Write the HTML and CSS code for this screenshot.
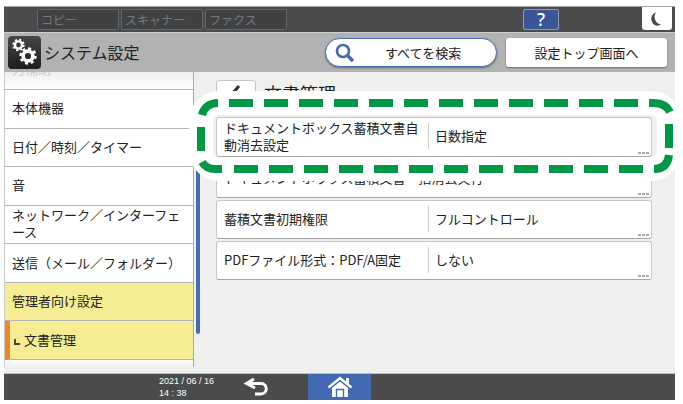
FILE: index.html
```html
<!DOCTYPE html>
<html lang="ja">
<head>
    <meta charset="UTF-8">
    <meta name="viewport" content="width=device-width, initial-scale=1.0">
    <title>システム設定</title>
    <link rel="stylesheet" href="styles.css">
</head>
<body>
    <div class="screen">
        <nav class="top-bar">
            <button class="app-tab">コピー</button>
            <button class="app-tab">スキャナー</button>
            <button class="app-tab">ファクス</button>
            <button class="help-btn">?</button>
            <button class="sleep-btn" aria-label="スリープ">
                <svg width="12" height="14" viewBox="0 0 12 14">
                    <path d="M5 0C1 2-1 6 1 10C3 14 7 14.500 10 12.500C6.500 12 4.500 9.500 3.800 6.500C3.300 4 3.700 2 5 0Z" fill="#4a4b4d"/>
                </svg>
            </button>
        </nav>

        <header class="header">
            <span class="app-icon">
                <svg width="33" height="33" viewBox="0 0 33 33" fill="none" stroke="#fff">
                    <circle cx="10.500" cy="9" r="3.600" stroke-width="2.400"/>
                    <circle cx="10.500" cy="9" r="5.200" stroke-width="2" stroke-dasharray="2.040 2.040"/>
                    <circle cx="20" cy="20" r="4.900" stroke-width="3.600"/>
                    <circle cx="20" cy="20" r="7.400" stroke-width="2.600" stroke-dasharray="2.900 2.900"/>
                </svg>
            </span>
            <h1>システム設定</h1>
            <button class="search-btn">
                <svg width="20" height="20" viewBox="0 0 20 20" fill="none" stroke="#416ab3">
                    <circle cx="8" cy="8" r="6" stroke-width="2.600"/>
                    <path d="M12.500 12.500L18 18" stroke-width="3.400"/>
                </svg>
                <span>すべてを検索</span>
            </button>
            <button class="home-link">設定トップ画面へ</button>
        </header>

        <div class="content">
            <ul class="sidebar">
                <li class="cut"><a href="#">力補助</a></li>
                <li><a href="#">本体機器</a></li>
                <li><a href="#">日付／時刻／タイマー</a></li>
                <li><a href="#">音</a></li>
                <li><a href="#">ネットワーク／インターフェース</a></li>
                <li><a href="#">送信（メール／フォルダー）</a></li>
                <li class="open"><a href="#">管理者向け設定</a></li>
                <li class="open current"><a href="#"><i class="branch"></i>文書管理</a></li>
                <li></li>
            </ul>
            <div class="scrollbar"><div class="thumb"></div></div>

            <main class="main">
                <div class="title-row">
                    <button class="prev-btn" aria-label="戻る">
                        <svg width="12" height="18" viewBox="0 0 12 18" fill="none" stroke="#333" stroke-width="3">
                            <path d="M10 1L3 9L10 17"/>
                        </svg>
                    </button>
                    <h2>文書管理</h2>
                </div>

                <div class="settings">
                    <div class="marked">
                        <button class="setting">
                            <span class="name">ドキュメントボックス蓄積文書自動消去設定</span>
                            <span class="value">日数指定</span>
                        </button>
                        <div class="marker">
                            <div class="dashes top"></div>
                            <div class="dashes bottom"></div>
                            <div class="dash left"></div>
                            <div class="dash right"></div>
                            <svg class="corner tl" viewBox="0 0 40 40"><path d="M13 24C15 16 21 12 29 12"/></svg>
                            <svg class="corner tr" viewBox="0 0 40 40"><path d="M8 12H13C20 12 26 15 29 21"/></svg>
                            <svg class="corner bl" viewBox="0 0 40 40"><path d="M13 21C16 26 20 28 26 28H33"/></svg>
                            <svg class="corner br" viewBox="0 0 40 40"><path d="M28 14C27 23 22 28 13 28"/></svg>
                        </div>
                    </div>
                    <button class="setting">
                        <span class="name wide">ドキュメントボックス蓄積文書一括消去実行</span>
                    </button>
                    <button class="setting">
                        <span class="name">蓄積文書初期権限</span>
                        <span class="value">フルコントロール</span>
                    </button>
                    <button class="setting">
                        <span class="name">PDFファイル形式：PDF/A固定</span>
                        <span class="value">しない</span>
                    </button>
                </div>
            </main>
        </div>

        <footer class="bottom-bar">
            <div class="clock">2021 / 06 / 16<br>14 : 38</div>
            <button class="back-btn" aria-label="戻る">
                <svg width="26" height="20" viewBox="0 0 26 20" fill="none" stroke="#fff" stroke-width="3">
                    <path d="M11 2L3.500 6.500L12 11"/>
                    <path d="M3 6.500H18C25 6.500 25 17 18 17H12"/>
                </svg>
            </button>
            <button class="home-btn" aria-label="ホーム">
                <svg width="26" height="22" viewBox="0 0 26 22">
                    <path d="M1.500 11.500L13 2L24.500 11.500" fill="none" stroke="#fff" stroke-width="2.400"/>
                    <path d="M19 2H22V8L19 5.500Z" fill="#fff"/>
                    <path d="M13 5.500L21 12V21H5V12Z" fill="#fff"/>
                    <path d="M9.500 21V13.500H16.500V21" fill="none" stroke="#416ab3" stroke-width="1.400"/>
                </svg>
            </button>
        </footer>
    </div>
</body>
</html>
```

FILE: styles.css
```css
* {
    margin: 0;
    padding: 0;
    box-sizing: border-box;
}

body {
    font-family: 'Noto Sans CJK JP', sans-serif;
    font-size: 13px;
    line-height: 17px;
    color: #222;
    background: #fff;
    min-height: 100vh;
    display: flex;
    padding: 6px 8px 4px 4px;
}

button {
    font: inherit;
    color: inherit;
    border: none;
    background: none;
    cursor: pointer;
}

a {
    color: inherit;
    text-decoration: none;
}

svg {
    display: block;
}

.screen {
    flex: 1;
    min-width: 0;
    display: flex;
    flex-direction: column;
    background: #efefee;
}

/* top bar */
.top-bar {
    display: flex;
    gap: 2px;
    height: 27px;
    padding: 0 3px 0 33px;
    background: #4a4b4d;
    border-top: 1px solid #a5a5a5;
    border-bottom: 1px solid #d0d0d0;
}

.app-tab {
    width: 82px;
    height: 21px;
    margin-top: 2px;
    padding-left: 3px;
    border: 1px solid #646566;
    border-radius: 2px;
    background: #404143;
    color: #77787a;
    font-size: 12px;
    line-height: 17px;
    text-align: left;
}

.help-btn {
    width: 36px;
    height: 21px;
    margin: 2px 81px 0 auto;
    border: 1px solid #8d9bbd;
    border-radius: 2px;
    background: #395696;
    color: #fff;
    font-family: 'Noto Sans', sans-serif;
    font-size: 18px;
    font-weight: 500;
}

.sleep-btn {
    width: 30px;
    height: 23px;
    border-radius: 0 0 3px 3px;
    background: #fff;
    display: flex;
    align-items: center;
    justify-content: center;
}

/* header */
.header {
    display: flex;
    align-items: center;
    height: 39px;
    padding: 0 8px 0 4px;
    background: #b2b2b2;
}

.app-icon {
    width: 33px;
    height: 33px;
    border-radius: 4px;
    background: linear-gradient(#474747, #1d1d1d);
}

h1 {
    margin-left: 3px;
    font-size: 16px;
    font-weight: 400;
}

.search-btn,
.home-link {
    height: 29px;
    background: #fff;
    box-shadow: 0 1px 2px rgba(0, 0, 0, 0.4);
}

.search-btn {
    display: flex;
    align-items: center;
    gap: 30px;
    width: 172px;
    margin-left: auto;
    padding-left: 9px;
    border: 1px solid #416ab3;
    border-radius: 15px;
}

.home-link {
    width: 161px;
    margin-left: 9px;
    border-radius: 3px;
}

/* content */
.content {
    flex: 1;
    display: flex;
}

.sidebar {
    width: 190px;
    margin-bottom: 6px;
    list-style: none;
    display: grid;
    grid-template-rows: 18px repeat(7, 1fr) 7px;
    background: #fff;
    border-left: 1px solid #c9c9c9;
    border-right: 1px solid #a9a9a9;
}

.sidebar li {
    display: flex;
    align-items: center;
    padding: 0 6px 2px 7px;
    border-bottom: 1px solid #b5b5b5;
}

.sidebar li:last-child {
    border-bottom: none;
    background: linear-gradient(#fff, #efefee);
}

.sidebar .cut {
    align-items: flex-start;
    overflow: hidden;
    background: linear-gradient(#efefef, #fff);
    color: #ccc;
}

.cut a {
    margin-top: -12px;
}

.sidebar .open {
    background: #f5ed94;
}

.sidebar .current {
    padding-left: 4px;
    border-left: 5px solid #ec8722;
}

.branch {
    display: inline-block;
    width: 6px;
    height: 6px;
    margin-right: 4px;
    border-left: 2px solid #444;
    border-bottom: 2px solid #444;
}

.scrollbar {
    width: 4px;
    margin-left: 2px;
}

.thumb {
    height: 182px;
    margin-top: 80px;
    border-radius: 2px;
    background: #456db4;
}

.main {
    flex: 1;
    min-width: 0;
    padding: 8px 23px 0 16px;
}

.title-row {
    display: flex;
    height: 37px;
    gap: 8px;
}

.prev-btn {
    width: 40px;
    height: 28px;
    padding-left: 12px;
    border: 1px solid #c4c4c4;
    border-radius: 3px;
    background: #fff;
}

h2 {
    font-size: 18px;
    font-weight: 400;
    line-height: 26px;
}

.settings {
    display: flex;
    flex-direction: column;
    gap: 2px;
}

.setting {
    position: relative;
    display: flex;
    align-items: center;
    width: 100%;
    min-height: 39px;
    padding: 1px 7px 3px;
    border: 1px solid #c6c6c6;
    border-bottom-color: #a5a5a5;
    border-radius: 3px;
    background: #fff;
    text-align: left;
}

.setting::after {
    content: '';
    position: absolute;
    right: 2px;
    bottom: 2px;
    width: 11px;
    height: 2px;
    background: repeating-linear-gradient(to right, #aaa 0 3px, transparent 3px 4px);
}

.name {
    width: 204px;
    padding-right: 6px;
}

.name.wide {
    width: auto;
}

.value {
    padding-left: 6px;
    border-left: 1px solid #ccc;
    line-height: 26px;
}

/* dashed frame around the highlighted setting */
.marked {
    position: relative;
    z-index: 1;
}

.marker {
    position: absolute;
    top: -26px;
    right: -29px;
    bottom: -24px;
    left: -27px;
    border: 24px solid #fff;
    border-radius: 30px;
    pointer-events: none;
}

.marker > * {
    position: absolute;
}

.dashes {
    height: 8px;
    background: linear-gradient(to right, #009844 24px, transparent 24px) 0 0 / 35px 8px round;
}

.dashes.top {
    top: -16px;
    left: 16px;
    right: 8px;
}

.dashes.bottom {
    bottom: -16px;
    left: 21px;
    right: 3px;
}

.dash {
    width: 8px;
    height: 24px;
    background: #009844;
}

.dash.left {
    top: 12px;
    left: -16px;
}

.dash.right {
    top: 9px;
    right: -16px;
}

.corner {
    width: 40px;
    height: 40px;
    fill: none;
    stroke: #009844;
    stroke-width: 8;
}

.tl { top: -24px; left: -24px; }
.tr { top: -24px; right: -24px; }
.bl { bottom: -24px; left: -24px; }
.br { bottom: -24px; right: -24px; }

/* bottom bar */
.bottom-bar {
    display: flex;
    align-items: center;
    height: 27px;
    padding-left: 155px;
    background: #4a4b4d;
    border-top: 1px solid #bcbcbc;
}

.clock {
    width: 84px;
    color: #fff;
    font-family: 'Liberation Sans', sans-serif;
    font-size: 9px;
    line-height: 12px;
}

.home-btn {
    width: 63px;
    height: 26px;
    margin-left: 39px;
    background: #416ab3;
    display: flex;
    align-items: center;
    justify-content: center;
}
```
